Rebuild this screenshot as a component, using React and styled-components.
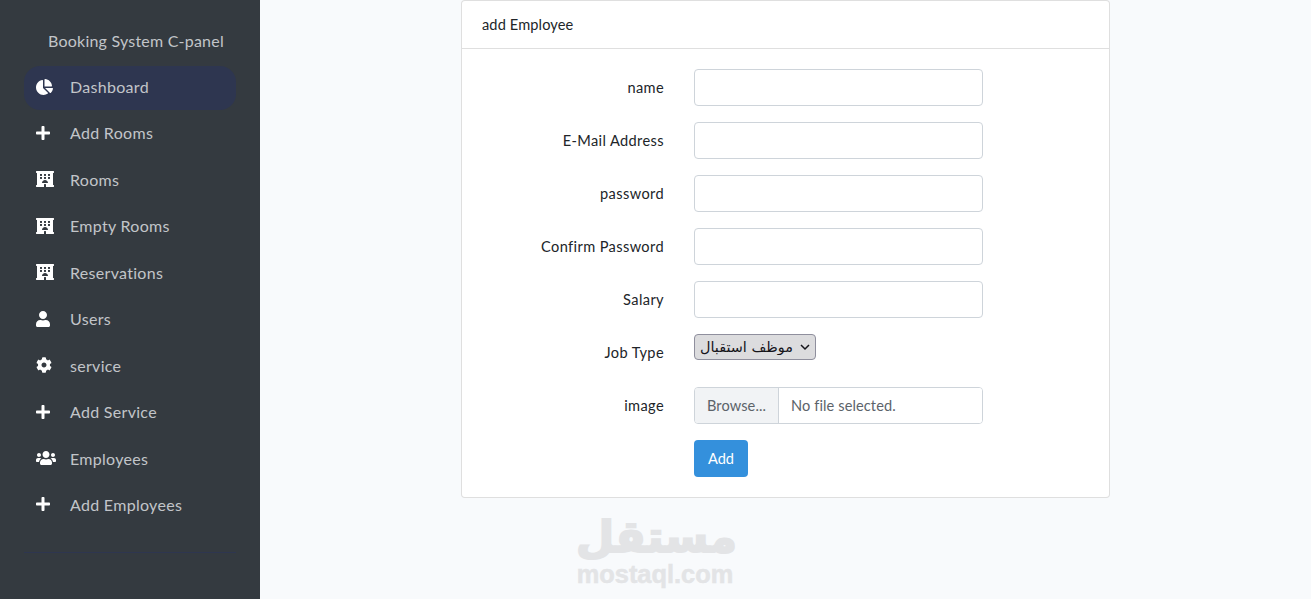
import React from 'react'
import styled, { createGlobalStyle } from 'styled-components'
import { FaChartPie, FaPlus, FaHotel, FaUser, FaCog, FaUsers } from 'react-icons/fa'

const GlobalStyle = createGlobalStyle`
  * { box-sizing: border-box; }
  html, body { margin: 0; height: 100%; }
  body {
    background: #f8fafc;
    color: #212529;
    font-family: "Lato", "Noto Sans", sans-serif;
    overflow: hidden;
  }
`

const Layout = styled.div`
  display: flex;
  height: 599px;
`
const Sidebar = styled.aside`
  width: 260px;
  flex-shrink: 0;
  background: #343a40;
  padding: 32px 24px 0;
`
const Brand = styled.div`
  height: 33.5px;
  padding-left: 24px;
  font-size: 16px;
  letter-spacing: 0.22px;
  line-height: 18px;
  color: #c2c5c9;
`
const Nav = styled.nav`
  display: flex;
  flex-direction: column;
  gap: 2.44px;
`
const NavItem = styled.a`
  display: flex;
  align-items: center;
  height: 44px;
  padding: 0 0 2px 12px;
  border-radius: 16px;
  font-size: 16px;
  letter-spacing: 0.3px;
  color: #c2c5c9;
  background: ${p => (p.$active ? '#2e3650' : 'transparent')};
`
const IconSlot = styled.span`
  display: flex;
  width: 34px;
  flex-shrink: 0;
  color: #fff;
  svg {
    flex: none;
    width: ${p => p.$width}px;
    height: 16px;
  }
`
const Divider = styled.hr`
  margin: 25px 0 0;
  border: 0;
  border-top: 1px solid #2e3650;
`
const Main = styled.main`
  flex: 1;
  position: relative;
  display: flex;
  justify-content: center;
  align-items: flex-start;
`
const Card = styled.section`
  width: 649px;
  background: #fff;
  border: 1px solid rgba(0, 0, 0, 0.125);
  border-radius: 4px;
`
const CardHeader = styled.header`
  height: 48px;
  padding: 0 20px;
  display: flex;
  align-items: center;
  font-size: 14.6px;
  letter-spacing: 0.12px;
  border-bottom: 1px solid rgba(0, 0, 0, 0.125);
`
const CardBody = styled.form`
  padding: 20px 20px 20px;
`
const Row = styled.div`
  display: grid;
  grid-template-columns: 182px 289px;
  column-gap: 30px;
  height: 37px;
  margin-bottom: 16px;
  &:last-child { margin-bottom: 0; }
`
const Label = styled.label`
  text-align: right;
  font-size: 14.6px;
  letter-spacing: 0.38px;
  line-height: 38px;
`
const Input = styled.input`
  display: block;
  width: 100%;
  height: 37px;
  background: #fff;
  border: 1px solid #ced4da;
  border-radius: 4px;
  outline: 0;
`
const SelectWrap = styled.div`
  position: relative;
  width: 122px;
  height: 26px;
`
const Select = styled.select`
  appearance: none;
  display: block;
  width: 100%;
  height: 26px;
  padding: 0 22px 0 5px;
  background: #dcdcde;
  border: 1px solid #8f8f9d;
  border-radius: 4px;
  color: #15141a;
  font-family: "DejaVu Sans", sans-serif;
  font-size: 14.4px;
  outline: 0;
`
const Chevron = styled.svg`
  position: absolute;
  top: 9px;
  right: 6px;
  width: 10px;
  height: 8px;
  pointer-events: none;
`
const FileBox = styled.div`
  display: flex;
  height: 37px;
  border: 1px solid #ced4da;
  border-radius: 4px;
  overflow: hidden;
  font-size: 14.6px;
  letter-spacing: 0.1px;
  color: #5c636a;
`
const Browse = styled.span`
  width: 84px;
  display: flex;
  align-items: center;
  justify-content: center;
  background: #f1f3f5;
  border-right: 1px solid #ced4da;
`
const FileName = styled.span`
  flex: 1;
  display: flex;
  align-items: center;
  padding-left: 12px;
  background: #fff;
`
const Button = styled.button`
  grid-column: 2;
  width: 54px;
  height: 37px;
  padding: 0;
  border: 0;
  border-radius: 4px;
  background: #3490dc;
  color: #fff;
  font-family: inherit;
  font-size: 14.6px;
`
const Watermark = styled.div`
  position: absolute;
  left: 316px;
  top: 512px;
  width: 158px;
  color: #e3e4e6;
  text-align: center;
  font-family: "Liberation Sans", Arial, sans-serif;
  font-weight: 700;
`
const WatermarkAr = styled.div`
  font-family: "DejaVu Sans", sans-serif;
  font-size: 44px;
  line-height: 50px;
  -webkit-text-stroke: 2px #e3e4e6;
`
const WatermarkEn = styled.div`
  font-size: 25.4px;
  line-height: 24px;
  -webkit-text-stroke: 0.5px #e3e4e6;
`

const links = [
  { label: 'Dashboard', Icon: FaChartPie, width: 17, active: true },
  { label: 'Add Rooms', Icon: FaPlus, width: 14 },
  { label: 'Rooms', Icon: FaHotel, width: 18 },
  { label: 'Empty Rooms', Icon: FaHotel, width: 18 },
  { label: 'Reservations', Icon: FaHotel, width: 18 },
  { label: 'Users', Icon: FaUser, width: 14 },
  { label: 'service', Icon: FaCog, width: 16 },
  { label: 'Add Service', Icon: FaPlus, width: 14 },
  { label: 'Employees', Icon: FaUsers, width: 20 },
  { label: 'Add Employees', Icon: FaPlus, width: 14 },
]

const fields = [
  { label: 'name', type: 'text' },
  { label: 'E-Mail Address', type: 'email' },
  { label: 'password', type: 'password' },
  { label: 'Confirm Password', type: 'password' },
  { label: 'Salary', type: 'text' },
]

const App = () => {
  return (
    <>
      <GlobalStyle />
      <Layout>
        <Sidebar>
          <Brand>Booking System C-panel</Brand>
          <Nav>
            {links.map(({ label, Icon, width, active }) => (
              <NavItem key={label} $active={active}>
                <IconSlot $width={width}><Icon /></IconSlot>
                {label}
              </NavItem>
            ))}
          </Nav>
          <Divider />
        </Sidebar>
        <Main>
          <Card>
            <CardHeader>add Employee</CardHeader>
            <CardBody>
              {fields.map(f => (
                <Row key={f.label}>
                  <Label>{f.label}</Label>
                  <Input type={f.type} />
                </Row>
              ))}
              <Row>
                <Label>Job Type</Label>
                <SelectWrap>
                  <Select defaultValue="reception">
                    <option value="reception">موظف استقبال</option>
                  </Select>
                  <Chevron viewBox="0 0 10 8">
                    <path d="M1 2l4 4 4-4" fill="none" stroke="#15141a" strokeWidth="1.5" />
                  </Chevron>
                </SelectWrap>
              </Row>
              <Row>
                <Label>image</Label>
                <FileBox>
                  <Browse>Browse...</Browse>
                  <FileName>No file selected.</FileName>
                </FileBox>
              </Row>
              <Row>
                <Button type="button">Add</Button>
              </Row>
            </CardBody>
          </Card>
          <Watermark>
            <WatermarkAr>مستقل</WatermarkAr>
            <WatermarkEn>mostaql.com</WatermarkEn>
          </Watermark>
        </Main>
      </Layout>
    </>
  )
}

export default App
